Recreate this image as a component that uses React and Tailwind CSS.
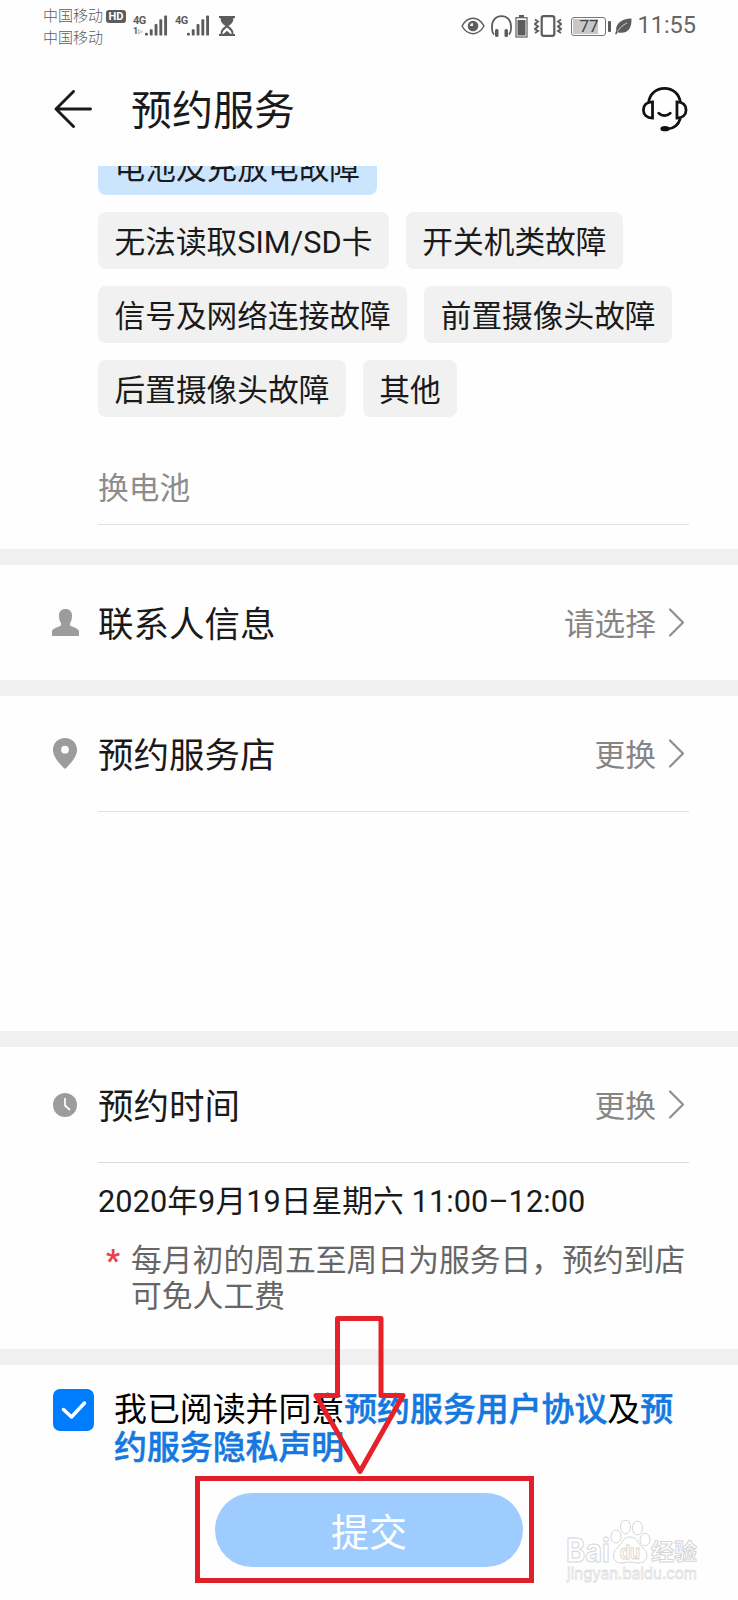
import React, { useState } from 'react';

// ── Data ────────────────────────────────────────────────────────────────────
const FAULT_ROWS = [
  ['无法读取SIM/SD卡', '开关机类故障'],
  ['信号及网络连接故障', '前置摄像头故障'],
  ['后置摄像头故障', '其他'],
];

// ── Status bar icons ────────────────────────────────────────────────────────
const Signal = ({ sub }) => (
  <div className="flex h-[22px] w-[35px] items-end">
    <div className="flex h-full w-3 flex-col text-[11px] leading-[11px] font-bold tracking-tighter text-[#5c5c5c]">
      <span>4G</span>
      {sub && <span className="text-[9px] leading-[11px]">1<span className="text-[#bbb]">▹</span></span>}
    </div>
    <svg width="24" height="22" viewBox="0 0 24 22" fill="#5c5c5c">
      <rect x="0" y="18" width="3" height="3" rx="1" />
      <rect x="5" y="14.500" width="3" height="6.500" rx="1" />
      <rect x="10" y="9" width="3" height="12" rx="1" />
      <rect x="15" y="4" width="3" height="17" rx="1" />
      <rect x="20" y="0" width="3" height="21" rx="1" />
    </svg>
  </div>
);

const HourglassIcon = () => (
  <svg width="16" height="20" viewBox="0 0 16 20" fill="#5c5c5c">
    <path d="M0 0h16v2h-1.500c0 4-2 6-5 8 3 2 5 4 5 8H16v2H0v-2h1.500c0-4 2-6 5-8-3-2-5-4-5-8H0z" />
    <path d="M3.200 17.800c.3-2.700 2-4.200 4.800-6.300 2.800 2.100 4.500 3.600 4.800 6.300h-1.500L8 14.800l-3.300 3z" fill="#fff" />
  </svg>
);

const EyeIcon = () => (
  <svg width="24" height="18" viewBox="0 0 24 18" fill="none" stroke="#5c5c5c" strokeWidth="1.500">
    <path d="M1 9C4 3.700 7.700 1.300 12 1.300S20 3.700 23 9c-3 5.300-6.700 7.700-11 7.700S4 14.300 1 9z" />
    <circle cx="12" cy="9" r="5.300" fill="#5c5c5c" stroke="none" />
    <path d="M9 9c0-1.800 1.200-3 3-3v3z" fill="#eee" stroke="none" />
  </svg>
);

const HeadphoneIcon = () => (
  <svg width="21" height="23" viewBox="0 0 21 23" fill="none" stroke="#5c5c5c" strokeWidth="1.800">
    <path d="M3 19.500C.5 17 1 14.500 1 11.500 1 5 5 1.200 10.500 1.200S20 5 20 11.500c0 3 .5 5.500-2 8" />
    <rect x="4" y="14" width="3.500" height="8" rx="1.500" fill="#5c5c5c" stroke="none" />
    <rect x="13.500" y="14" width="3.500" height="8" rx="1.500" fill="#5c5c5c" stroke="none" />
  </svg>
);

const SmallBattery = () => (
  <svg width="13" height="23" viewBox="0 0 13 23">
    <rect x="4" y="0" width="5" height="2" fill="#5c5c5c" />
    <rect x="1" y="2.700" width="11" height="19.300" fill="none" stroke="#5c5c5c" strokeWidth="1.200" />
    <rect x="2.500" y="5" width="8" height="15.500" fill="#5c5c5c" />
  </svg>
);

const VibrateIcon = () => (
  <svg width="28" height="22" viewBox="0 0 28 22" fill="none" stroke="#5c5c5c" strokeWidth="2.200">
    <rect x="7.700" y="1.200" width="12.600" height="19.600" rx="2" />
    <path d="M1 4.500l3 2-3 2.500 3 2.500-3 2.500 3 2-3 2M27 4.500l-3 2 3 2.500-3 2.500 3 2.500-3 2 3 2" strokeWidth="1.900" />
  </svg>
);

const BatteryLevel = () => (
  <div className="flex items-center">
    <div className="relative flex h-[19px] w-[35px] items-center justify-center rounded-[3px] border border-[#777] text-[17px] leading-none text-[#444]">
      <div className="absolute inset-y-[1px] left-[1px] w-[25px] bg-[#c8c8c8]" />
      <span className="relative">77</span>
    </div>
    <div className="ml-[2px] h-[11px] w-[3px] rounded-[1px] bg-[#5c5c5c]" />
  </div>
);

const LeafIcon = () => (
  <svg width="17" height="17" viewBox="0 0 17 17">
    <path d="M16.500.5C6 1 .5 5.500 1.200 13L0 16l1.200.5 1.600-2.200C11 16.500 17 12 16.500.5z" fill="#5c5c5c" />
    <path d="M2.500 13.500C5 9.500 8 7 12 5" stroke="#fff" strokeWidth="0.700" fill="none" />
  </svg>
);

const StatusBar = () => (
  <div className="flex h-[52px] items-start justify-between pr-[42px] pl-[43px] text-[#5c5c5c]">
    <div className="flex items-start">
      <div className="pt-[5px] text-[15px] leading-[22px] font-light">
        <div className="flex items-center">
          中国移动
          <span className="ml-[3px] flex h-[13px] w-[20px] items-center justify-center rounded-[3px] bg-[#5c5c5c] text-[11px] leading-none font-bold text-white">
            HD
          </span>
        </div>
        <div>中国移动</div>
      </div>
      <div className="ml-[7px] flex pt-[15px]">
        <Signal sub />
        <div className="ml-[7px]"><Signal /></div>
        <div className="ml-[9px] pt-px"><HourglassIcon /></div>
      </div>
    </div>
    <div className="flex h-[52px] items-center">
      <EyeIcon />
      <div className="ml-[6px]"><HeadphoneIcon /></div>
      <div className="ml-[3px]"><SmallBattery /></div>
      <div className="ml-[6px]"><VibrateIcon /></div>
      <div className="ml-[9px]"><BatteryLevel /></div>
      <div className="ml-[4px]"><LeafIcon /></div>
      <span className="ml-[5px] text-[23.500px] leading-none text-[#666]">11:55</span>
    </div>
  </div>
);

// ── Page icons ──────────────────────────────────────────────────────────────
const BackIcon = () => (
  <svg width="38" height="38" viewBox="0 0 38 38" fill="none" stroke="#1a1a1a" strokeWidth="2.900" strokeLinecap="round" strokeLinejoin="round">
    <path d="M19.500 1.500L2 19l17.500 17.500M2 19h34.500" />
  </svg>
);

const ServiceIcon = () => (
  <svg width="47" height="46" viewBox="0 0 48 48" fill="none" stroke="#111" strokeWidth="2.900">
    <path d="M7.500 17C8.500 8.500 15 2.500 24 2.500S39.500 8.500 40.500 17" />
    <path d="M11.500 16.500v17C5.500 33.500 2 30 2 25s3.500-8.500 9.500-8.500zM37 16.500v17c6 0 9.500-3.500 9.500-8.500s-3.500-8.500-9.500-8.500z" />
    <path d="M18 28.500c3.500 3.200 8.500 3.200 12 0" strokeLinecap="round" />
    <path d="M40.500 34c-2 6.500-7 10.500-14 11" />
    <ellipse cx="24.500" cy="44.500" rx="4.800" ry="2.800" fill="#111" stroke="none" />
  </svg>
);

const PersonIcon = () => (
  <svg width="27" height="27" viewBox="0 0 27 27" fill="#9c9c9c">
    <path d="M13.500 0C17.500 0 20 2.500 20 6.500c0 4-1 6.200-2 8v2c3 1.600 8 2.600 9 5.500v4c0 .6-.4 1-1 1H1c-.6 0-1-.4-1-1v-4c1-2.900 6-3.900 9-5.500v-2c-1-1.800-2-4-2-8C7 2.500 9.500 0 13.500 0z" />
  </svg>
);

const PinIcon = () => (
  <svg width="24" height="31" viewBox="0 0 24 31" fill="#9c9c9c">
    <path fillRule="evenodd" d="M12 0c6.800 0 12 5 12 11.700C24 19 17.500 25.500 13 30.300c-.6.600-1.400.6-2 0C6.500 25.500 0 19 0 11.700 0 5 5.200 0 12 0zm0 7.800a3.900 3.900 0 100 7.800 3.900 3.900 0 000-7.800z" />
  </svg>
);

const ClockIcon = () => (
  <svg width="24" height="24" viewBox="0 0 24 24">
    <circle cx="12" cy="12" r="12" fill="#9c9c9c" />
    <path d="M12 5.500v7l4.500 4" fill="none" stroke="#fff" strokeWidth="1.700" strokeLinecap="round" />
  </svg>
);

const Chevron = () => (
  <svg width="17" height="29" viewBox="0 0 17 29" fill="none" stroke="#8f8f8f" strokeWidth="2.200" strokeLinecap="round" strokeLinejoin="round">
    <path d="M2 1.500l13 13-13 13" />
  </svg>
);

// ── Building blocks ─────────────────────────────────────────────────────────
const Divider = () => <div className="h-4 bg-[#f0f0f0]" />;

const Chip = ({ label, selected }) => (
  <button
    className={`flex h-[57px] items-center rounded-lg px-[16.500px] pt-[6px] text-[30.700px] leading-none whitespace-nowrap text-[#1a1a1a] ${
      selected ? 'bg-[#cce5ff]' : 'bg-[#f1f1f1]'
    }`}
  >
    {label}
  </button>
);

const SectionRow = ({ icon, title, action }) => (
  <div className="flex h-[115px] items-center pr-[53px]">
    <div className="flex w-[98px] justify-center pl-[32px]">{icon}</div>
    <h2 className="flex-1 pt-[6px] text-[35.500px] leading-none text-[#1a1a1a]">{title}</h2>
    <span className="mr-[12px] pt-[6px] text-[30.700px] leading-none text-[#858585]">{action}</span>
    <Chevron />
  </div>
);

// Outlined paw + wordmark in the bottom corner
const Watermark = () => (
  <div className="absolute top-[1519px] left-[566px] w-[134px]">
    <svg width="134" height="66" viewBox="0 0 134 66" fill="#fff" stroke="#d6d6d6" strokeWidth="1">
      <text x="0" y="43" fontSize="32" fontWeight="700" fontFamily="Inter, sans-serif" textLength="44" lengthAdjust="spacingAndGlyphs">Bai</text>
      <ellipse cx="50" cy="17.500" rx="5" ry="6.500" />
      <ellipse cx="59.500" cy="8" rx="5" ry="6.800" />
      <ellipse cx="71.500" cy="9" rx="5" ry="6.800" />
      <ellipse cx="79" cy="20.500" rx="5" ry="6.300" />
      <path d="M64 18c7 0 8 7 13 11 7 6 4 15-4 15-4 0-5-1-9-1s-6 1-9 1c-8 0-10-9-4-15 5-4 6-11 13-11z" />
      <text x="54" y="40" fontSize="19" fontWeight="700" fontFamily="Inter, sans-serif" textLength="20" lengthAdjust="spacingAndGlyphs">du</text>
      <text x="85" y="41" fontSize="23" fontWeight="700" fontFamily="'Noto Sans CJK SC', sans-serif">经验</text>
      <text x="1" y="60" fontSize="16" stroke="#dedede" strokeWidth="0.800" fontFamily="Inter, sans-serif" textLength="130" lengthAdjust="spacingAndGlyphs">jingyan.baidu.com</text>
    </svg>
  </div>
);

// Red arrow and frame pointing at the submit button
const Callout = () => (
  <>
    <svg className="absolute top-[1314px] left-[310px]" width="100" height="164" viewBox="0 0 100 164" fill="none" stroke="#e62129" strokeWidth="5" strokeLinejoin="round">
      <path d="M27.500 4.500h43.500v77h22L50 157.500 6 81.500h21.500z" />
    </svg>
    <div className="absolute top-[1476px] left-[195px] h-[107px] w-[339px] border-[5px] border-[#e02028]" />
  </>
);

const App = () => {
  const [agreed, setAgreed] = useState(true);

  return (
    <div
      className="relative flex h-[1600px] w-[738px] flex-col overflow-hidden bg-[#fefefe]"
      style={{ fontFamily: "Roboto, 'Noto Sans CJK SC', sans-serif" }}
    >
      <StatusBar />

      {/* ── Header ───────────────────────────────────────────────────────── */}
      <header className="flex h-[114px] items-center pr-[50px] pl-[54px]">
        <BackIcon />
        <h1 className="ml-[39px] flex-1 pt-[5px] text-[41px] leading-none text-[#1a1a1a]">预约服务</h1>
        <ServiceIcon />
      </header>

      {/* ── Fault chips, scrolled under the header ───────────────────────── */}
      <section className="h-[383px] overflow-hidden pr-[49px] pl-[98px]">
        <div className="-mt-[28px] flex">
          <Chip label="电池及充放电故障" selected />
        </div>
        {FAULT_ROWS.map((row) => (
          <div key={row[0]} className="mt-[17px] flex gap-[17px]">
            {row.map((label) => <Chip key={label} label={label} />)}
          </div>
        ))}
        <div className="mt-[35px] flex h-[73px] items-center border-b border-[#e2e2e2] pt-[2px] text-[30.700px] leading-none text-[#8c8c8c]">
          换电池
        </div>
      </section>

      <Divider />
      <SectionRow icon={<PersonIcon />} title="联系人信息" action="请选择" />

      <Divider />
      <section className="h-[335px]">
        <SectionRow icon={<PinIcon />} title="预约服务店" action="更换" />
        <div className="mr-[49px] ml-[98px] border-b border-[#e2e2e2]" />
      </section>

      <Divider />
      <section className="h-[302px]">
        <SectionRow icon={<ClockIcon />} title="预约时间" action="更换" />
        <div className="mr-[49px] ml-[98px] border-b border-[#d8d8d8]" />
        <p className="mt-[19px] ml-[98px] text-[30.700px] leading-[40px] tracking-[0.080px] text-[#1a1a1a]">
          2020年9月19日星期六 11:00–12:00
        </p>
        <div className="mt-[21px] ml-[106px] flex text-[30.800px] leading-[36px] text-[#666]">
          <span className="w-[25px] font-bold text-[#e64547]">*</span>
          <p className="w-[562px]">每月初的周五至周日为服务日，预约到店可免人工费</p>
        </div>
      </section>

      <Divider />

      {/* ── Agreement ────────────────────────────────────────────────────── */}
      <div className="flex h-[102px] pt-[24px] pl-[53px]">
        <button
          onClick={() => setAgreed(!agreed)}
          className="flex h-[42px] w-[41px] items-center justify-center rounded-[7px] bg-[#007dff]"
          aria-label="同意"
        >
          {agreed && (
            <svg width="26" height="20" viewBox="0 0 26 20" fill="none" stroke="#fff" strokeWidth="3.500" strokeLinecap="round" strokeLinejoin="round">
              <path d="M2.500 9.500l8 7.500L23.500 3" />
            </svg>
          )}
        </button>
        <p className="ml-[20px] w-[570px] pt-[2px] text-[32.900px] leading-[38px] text-black">
          我已阅读并同意
          <span className="font-medium text-[#1478e0] [-webkit-text-stroke:0.500px_#1478e0]">预约服务用户协议</span>及
          <span className="font-medium text-[#1478e0] [-webkit-text-stroke:0.500px_#1478e0]">预约服务隐私声明</span>
        </p>
      </div>

      <button className="mt-[26px] ml-[215px] flex h-[74px] w-[308px] items-center justify-center rounded-full bg-[#9fccfe] pt-[6px] text-[38px] leading-none text-white">
        提交
      </button>

      <Callout />
      <Watermark />
    </div>
  );
};

export default App;
